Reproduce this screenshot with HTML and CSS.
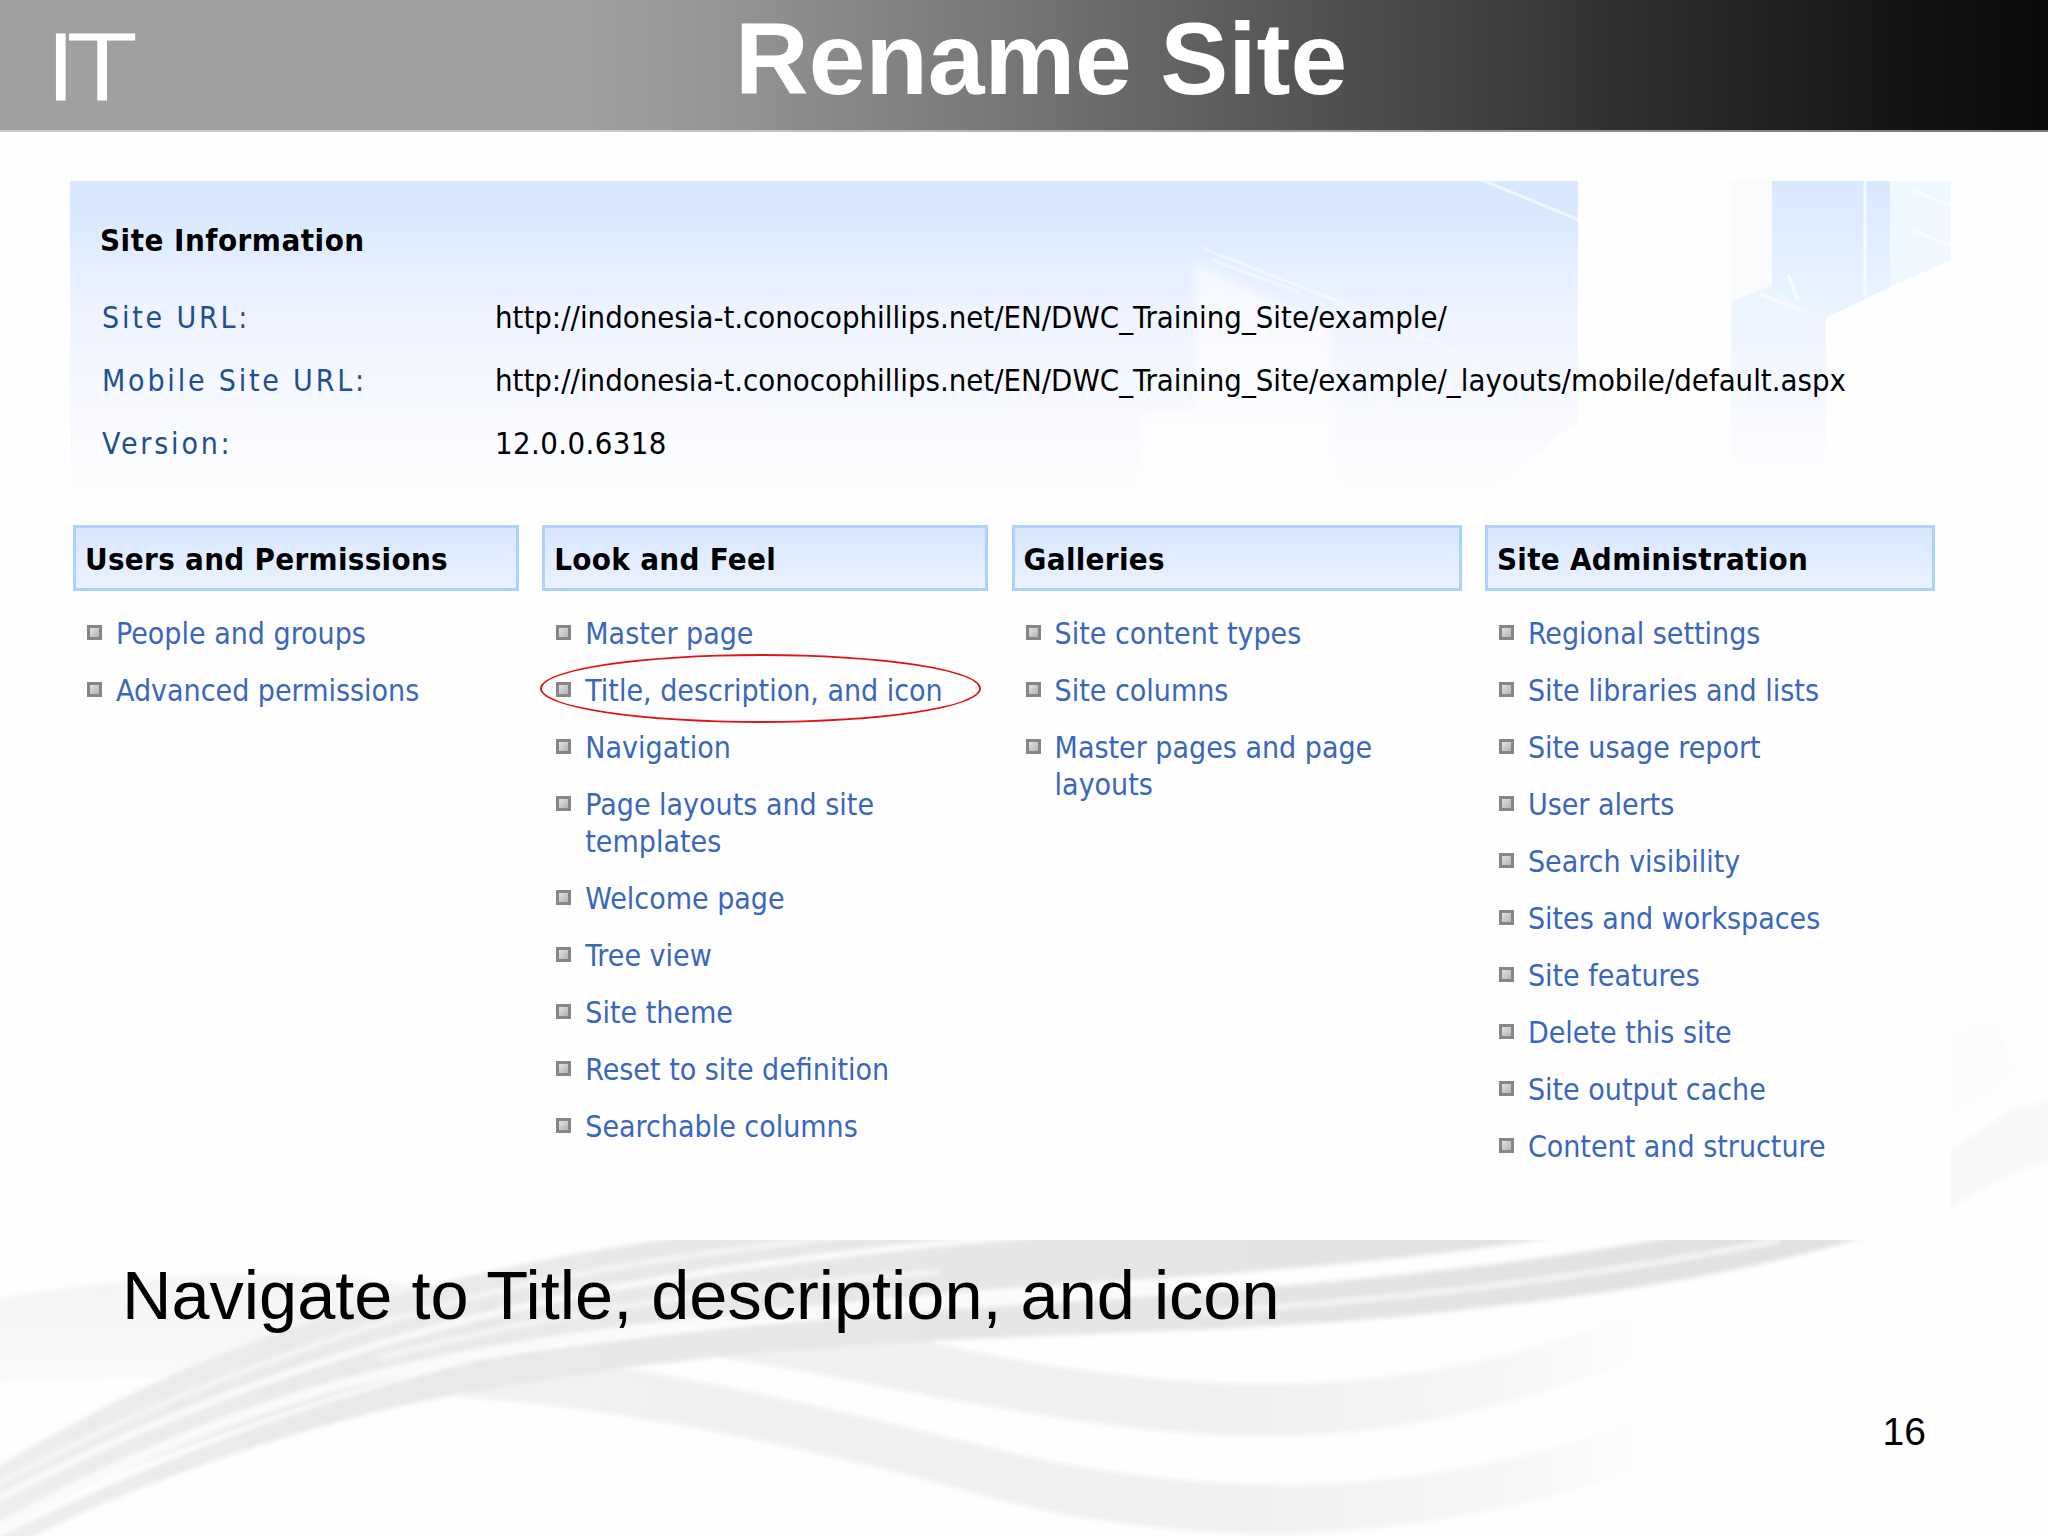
FILE: index.html
```
<!DOCTYPE html>
<html lang="en">
<head>
    <meta charset="UTF-8">
    <title>Rename Site</title>
    <link rel="stylesheet" href="styles.css">
</head>
<body>

<div class="slide">
    <!-- background waves -->
    <svg class="waves" viewBox="0 0 2048 1536" width="2048" height="1536">
        <defs>
            <linearGradient id="fade" gradientUnits="userSpaceOnUse" x1="460" y1="0" x2="1660" y2="0">
                <stop offset="0" stop-color="#f1f0f2"/>
                <stop offset="0.65" stop-color="#f1eff2"/>
                <stop offset="0.88" stop-color="#f8f6f9"/>
                <stop offset="1" stop-color="#fefdff"/>
            </linearGradient>
            <linearGradient id="band" gradientUnits="userSpaceOnUse" x1="0" y1="0" x2="1860" y2="0">
                <stop offset="0" stop-color="#ededed"/>
                <stop offset="0.3" stop-color="#e9e8ea"/>
                <stop offset="1" stop-color="#e2e0e3"/>
            </linearGradient>
            <linearGradient id="mist" x1="0" y1="0" x2="0" y2="1">
                <stop offset="0" stop-color="#f4f4f5"/>
                <stop offset="1" stop-color="#fafafb"/>
            </linearGradient>
        </defs>
        <g class="soft">
            <path fill="url(#mist)" d="M-10 1300 C90 1283 200 1270 320 1277 S430 1290 450 1300 L255 1375 C160 1376 90 1376 -10 1383Z"/>
            <path fill="url(#fade)" d="M459 1397 C520 1372 600 1362 660 1374 C760 1392 880 1420 1000 1450 C1080 1470 1190 1486 1301 1485 C1440 1481 1560 1450 1655 1417 L1655 1462 C1590 1486 1480 1526 1290 1534 C1180 1535 1080 1520 1000 1500 C860 1460 640 1408 459 1397Z"/>
            <path fill="url(#fade)" d="M701 1355 L920 1340 C990 1356 1130 1384 1267 1384 C1400 1384 1540 1355 1655 1305 L1655 1350 C1540 1398 1420 1436 1267 1436 C1170 1436 1070 1420 1000 1408 C900 1392 800 1368 701 1355Z"/>
            <path fill="url(#band)" d="M-10 1472 C150 1372 360 1280 689 1236 L1560 1236 C1420 1262 1200 1276 1000 1289 C800 1306 620 1322 480 1355 C300 1400 120 1470 -10 1525Z"/>
            <path fill="url(#band)" d="M-10 1541 C140 1468 290 1405 480 1360 C640 1334 820 1318 1000 1306 C1260 1290 1480 1272 1680 1236 L1868 1236 C1740 1274 1600 1296 1468 1309 C1300 1330 1150 1330 1000 1338 C780 1346 560 1370 383 1410 C250 1444 120 1490 10 1548Z"/>
            <!-- highlights running along the ribbon -->
            <path class="shine thick" d="M-5 1530 C120 1460 250 1405 383 1374 C560 1332 740 1318 880 1308 S1100 1292 1180 1286"/>
            <path class="shine" d="M-10 1503 C120 1434 240 1386 383 1343 C560 1290 760 1258 1060 1232"/>
            <path class="shine faint" d="M-10 1488 C130 1410 300 1345 440 1306 C560 1272 690 1254 880 1232"/>
            <path class="shine faint" d="M380 1358 C560 1309 760 1284 940 1272"/>
            <path class="shine faint" d="M1200 1312 C1400 1300 1600 1276 1780 1240"/>
            <path fill="#fcfafd" d="M1945 1040 L1975 1025 L2000 1030 L2012 1070 L1980 1098 L1945 1114Z"/>
            <path fill="#f9f7fa" d="M1945 1150 C1975 1136 1990 1125 2010 1110 L2055 1100 L2055 1160 C2020 1166 1990 1186 1945 1210Z"/>
        </g>
    </svg>

    <header class="header">
        <div class="logo">IT</div>
        <h1 class="title">Rename Site</h1>
    </header>

    <main class="panel">
        <section class="info">
            <!-- building artwork on the right of the banner -->
            <svg class="artwork" viewBox="1130 181 821 344" width="821" height="344">
                <defs>
                    <linearGradient id="sky" x1="0" y1="0" x2="0" y2="1">
                        <stop offset="0" stop-color="#dae8ff"/>
                        <stop offset="1" stop-color="#eaf5ff"/>
                    </linearGradient>
                    <linearGradient id="tower" x1="0" y1="0" x2="0" y2="1">
                        <stop offset="0" stop-color="#ebf4ff"/>
                        <stop offset="0.5" stop-color="#f3f7ff"/>
                        <stop offset="1" stop-color="#fdfdff"/>
                    </linearGradient>
                </defs>
                <path class="blurred" fill="#fff" opacity=".6" d="M1196 264 L1330 330 L1336 525 L1140 525 L1140 412 L1196 412Z"/>
                <path stroke="#fff" stroke-width="3" opacity=".4" d="M1202 248 L1335 300 M1212 260 L1300 292"/>
                <path stroke="#fff" stroke-width="3" opacity=".3" d="M1335 300 L1480 362 M1340 365 L1410 425"/>
                <path stroke="#eef8ff" stroke-width="3" d="M1482 180 L1579 220"/>
                <path fill="#fefeff" d="M1578 181 H1951 V525 H1450 L1578 420Z"/>
                <path fill="#f9fbfc" d="M1731 181 H1772 V285 L1731 302Z"/>
                <path fill="url(#tower)" d="M1731 302 L1772 285 L1830 300 L1826 318 V465 H1731Z"/>
                <path fill="url(#sky)" d="M1772 181 H1890 V287 L1826 318 L1772 290Z"/>
                <path fill="#eff7ff" d="M1890 181 H1951 V260 L1890 287Z"/>
                <path stroke="#f4fbff" stroke-width="3" d="M1865 181 V296"/>
                <path stroke="#f8fcff" stroke-width="4" d="M1912 190 L1951 206 M1912 230 L1951 246"/>
                <path stroke="#f4faff" stroke-width="4" d="M1760 294 L1800 310 M1788 275 L1798 300"/>
            </svg>
            <h2 class="info_title">Site Information</h2>
            <dl class="info_list">
                <dt>Site URL:</dt>
                <dd>http://indonesia-t.conocophillips.net/EN/DWC_Training_Site/example/</dd>
                <dt>Mobile Site URL:</dt>
                <dd>http://indonesia-t.conocophillips.net/EN/DWC_Training_Site/example/_layouts/mobile/default.aspx</dd>
                <dt>Version:</dt>
                <dd class="version">12.0.0.6318</dd>
            </dl>
        </section>

        <div class="columns">
            <section>
                <h3>Users and Permissions</h3>
                <ul>
                    <li><a>People and groups</a></li>
                    <li><a>Advanced permissions</a></li>
                </ul>
            </section>
            <section>
                <h3>Look and Feel</h3>
                <ul>
                    <li><a>Master page</a></li>
                    <li class="circled"><a>Title, description, and icon</a></li>
                    <li><a>Navigation</a></li>
                    <li><a>Page layouts and site templates</a></li>
                    <li><a>Welcome page</a></li>
                    <li><a>Tree view</a></li>
                    <li><a>Site theme</a></li>
                    <li><a>Reset to site definition</a></li>
                    <li><a>Searchable columns</a></li>
                </ul>
            </section>
            <section>
                <h3>Galleries</h3>
                <ul>
                    <li><a>Site content types</a></li>
                    <li><a>Site columns</a></li>
                    <li><a>Master pages and page layouts</a></li>
                </ul>
            </section>
            <section>
                <h3>Site Administration</h3>
                <ul>
                    <li><a>Regional settings</a></li>
                    <li><a>Site libraries and lists</a></li>
                    <li><a>Site usage report</a></li>
                    <li><a>User alerts</a></li>
                    <li><a>Search visibility</a></li>
                    <li><a>Sites and workspaces</a></li>
                    <li><a>Site features</a></li>
                    <li><a>Delete this site</a></li>
                    <li><a>Site output cache</a></li>
                    <li><a>Content and structure</a></li>
                </ul>
            </section>
        </div>
    </main>

    <p class="caption">Navigate to Title, description, and icon</p>
    <footer class="page_number">16</footer>
</div>

</body>
</html>
```
FILE: styles.css
```
*, *::before, *::after {
    box-sizing: border-box;
}
body, h1, h2, h3, p, ul, dl, dd {
    margin: 0;
    padding: 0;
}
li {
    list-style: none;
}
.slide {
    position: relative;
    width: 2048px;
    height: 1536px;
    overflow: hidden;
    background: #fefefe;
    color: #000;
    font-family: "Liberation Sans", Arial, sans-serif;
}
.waves {
    position: absolute;
    left: 0;
    top: 0;
}
.soft {
    filter: blur(2px);
}
.shine {
    fill: none;
    stroke: #fafafa;
    stroke-width: 7;
}
.shine.thick {
    stroke-width: 11;
}
.shine.faint {
    stroke: #f4f3f5;
    stroke-width: 6;
}

/* header */
.header {
    position: relative;
    display: flex;
    height: 132px;
    border-bottom: 2px solid rgba(255, 255, 255, .45);
    background: linear-gradient(to right, #a0a0a0 0, #9f9f9f 590px, #979797 700px, #828282 900px, #6e6e6e 1080px, #545454 1300px, #3e3e3e 1500px, #323232 1600px, #232323 1750px, #141414 1900px, #0a0a0a 2048px) border-box;
}
.logo {
    width: 735px;
    padding-left: 46px;
    color: #fff;
    font: 300 90px/128px Lato, sans-serif;
    letter-spacing: -5px;
    transform: scaleX(1.26);
    transform-origin: 46px 0;
    -webkit-text-stroke: 3px #fff;
}
.title {
    color: #fff;
    font-size: 102px;
    line-height: 118px;
    white-space: nowrap;
}

/* settings panel */
.panel {
    position: relative;
    width: 1881px;
    height: 1059px;
    margin: 49px 0 0 70px;
    background: #fefefe;
    font-family: "DejaVu Sans Condensed", "DejaVu Sans", Tahoma, sans-serif;
    font-size: 30px;
}
.info {
    position: relative;
    height: 344px;
    padding: 39px 0 0 30px;
    background: linear-gradient(#d8e8ff 0, #d9e8ff 25px, #e3efff 80px, #eef3ff 130px, #f4f7ff 190px, #fafbff 260px, #fefefe 330px);
}
.artwork {
    position: absolute;
    right: 0;
    top: 0;
}
.blurred {
    filter: blur(4px);
}
.info_title {
    position: relative;
    margin-bottom: 26px;
    font-size: 31px;
    line-height: 40px;
    letter-spacing: .5px;
}
.info_list {
    position: relative;
    display: grid;
    grid-template-columns: 395px 1fr;
    line-height: 63px;
}
.info_list dt {
    padding-left: 2px;
    color: #1f4f92;
    letter-spacing: 2.8px;
}
.info_list dd {
    font-size: 30.8px;
    white-space: nowrap;
}
.info_list .version {
    letter-spacing: .4px;
}
.columns {
    display: grid;
    grid-template-columns: 446px 446px 450px 450px;
    column-gap: 23.3px;
    padding-left: 3px;
}
.columns h3 {
    height: 66px;
    margin-bottom: 24px;
    padding: 2px 0 0 9px;
    border: 3px solid #add2fb;
    background: linear-gradient(#d8e7ff, #ebf2ff);
    font-size: 31px;
    line-height: 58px;
    letter-spacing: .3px;
}
.columns li {
    position: relative;
    display: flex;
    gap: 14px;
    margin-bottom: 19.7px;
    padding-left: 14px;
    color: #3a67bd;
    line-height: 37.3px;
}
.columns li::before {
    content: "";
    flex: none;
    width: 15px;
    height: 15px;
    margin-top: 10px;
    border: 3px solid #868686;
    background: linear-gradient(135deg, #e2e2e2, #b4b4b4);
}
.circled::after {
    content: "";
    position: absolute;
    left: -2px;
    top: -18px;
    width: 441px;
    height: 69px;
    border: 2px solid #e01414;
    border-radius: 50%;
}

.caption {
    position: relative;
    margin: 16px 0 0 122px;
    font-size: 68.5px;
    line-height: 80px;
}
.page_number {
    position: relative;
    margin: 71px 122px 0 0;
    font-size: 39px;
    line-height: 50px;
    text-align: right;
}
```
